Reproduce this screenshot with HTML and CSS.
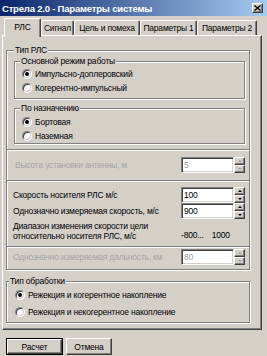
FILE: index.html
```html
<!DOCTYPE html>
<html lang="ru">
<head>
<meta charset="utf-8">
<title>Стрела 2.0 - Параметры системы</title>
<link rel="stylesheet" href="styles.css">
</head>
<body>
<div class="window">
  <div class="titlebar">
    <span class="title">Стрела 2.0 - Параметры системы</span>
    <span class="close"><svg width="7" height="6" viewBox="0 0 7 6"><path d="M0.5 0.5 L6.5 5.5 M6.5 0.5 L0.5 5.5" stroke="#000" stroke-width="1.4"/></svg></span>
  </div>
  <div class="tabs">
    <div class="tab tab-active tab-rls">РЛС</div>
    <div class="tab tab-signal">Сигнал</div>
    <div class="tab tab-target">Цель и помеха</div>
    <div class="tab tab-p1">Параметры 1</div>
    <div class="tab tab-p2">Параметры 2</div>
  </div>
  <div class="sheet">
    <div class="group group-outer">
      <span class="legend legend-outer">Тип РЛС</span>
      <div class="group group-inner group-mode">
        <span class="legend legend-inner">Основной режим работы</span>
        <div class="radio-row"><span class="radio radio-on"></span><span>Импульсно-доплеровский</span></div>
        <div class="radio-row"><span class="radio"></span><span>Когерентно-импульсный</span></div>
      </div>
      <div class="group group-inner group-dest">
        <span class="legend legend-inner">По назначению</span>
        <div class="radio-row"><span class="radio radio-on"></span><span>Бортовая</span></div>
        <div class="radio-row"><span class="radio"></span><span>Наземная</span></div>
      </div>
    </div>

    <div class="frame frame-height">
      <div class="field-row">
        <span class="label label-disabled">Высота установки антенны, м</span>
        <div class="spin spin-disabled"><span class="spin-field">5</span><span class="spin-btns"><span class="spin-btn"><i class="arrow-up"></i></span><span class="spin-btn"><i class="arrow-down"></i></span></span></div>
      </div>
    </div>

    <div class="frame frame-speed">
      <div class="field-row">
        <span class="label">Скорость носителя РЛС м/с</span>
        <div class="spin"><span class="spin-field">100</span><span class="spin-btns"><span class="spin-btn"><i class="arrow-up"></i></span><span class="spin-btn"><i class="arrow-down"></i></span></span></div>
      </div>
      <div class="field-row">
        <span class="label">Однозначно измеряемая скорость, м/с</span>
        <div class="spin"><span class="spin-field">900</span><span class="spin-btns"><span class="spin-btn"><i class="arrow-up"></i></span><span class="spin-btn"><i class="arrow-down"></i></span></span></div>
      </div>
      <div class="range-row">
        <span class="label label-two">Диапазон изменения скорости цели<br>относительно носителя РЛС, м/с</span>
        <span class="range-val"><span>-800...</span><span>1000</span></span>
      </div>
    </div>

    <div class="frame frame-range">
      <div class="field-row">
        <span class="label label-disabled">Однозначно измеряемая дальность, км</span>
        <div class="spin spin-disabled"><span class="spin-field">80</span><span class="spin-btns"><span class="spin-btn"><i class="arrow-up"></i></span><span class="spin-btn"><i class="arrow-down"></i></span></span></div>
      </div>
    </div>

    <div class="group group-proc">
      <span class="legend legend-proc">Тип обработки</span>
      <div class="radio-row"><span class="radio radio-on"></span><span>Режекция и когерентное накопление</span></div>
      <div class="radio-row"><span class="radio"></span><span>Режекция и некогерентное накопление</span></div>
    </div>
  </div>
  <div class="buttons">
    <div class="btn btn-default"><span class="btn-inner">Расчет</span></div>
    <div class="btn btn-cancel"><span class="btn-inner">Отмена</span></div>
  </div>
</div>
</body>
</html>
```
FILE: styles.css
```css
* { box-sizing: border-box; }
html, body { margin: 0; padding: 0; }
body {
  width: 267px;
  height: 356px;
  overflow: hidden;
  background: #d4d0c8;
  font-family: "Liberation Sans", Arial, sans-serif;
  font-size: 8.5px;
  letter-spacing: -0.2px;
  color: #000;
}
.window { width: 267px; height: 356px; display: flex; flex-direction: column; }

.titlebar {
  height: 16px;
  flex: none;
  background: linear-gradient(to right, #0a246a, #a6caf0);
  display: flex;
  align-items: center;
  justify-content: space-between;
  padding: 0 4px 0 2px;
}
.title { color: #fff; font-weight: bold; font-size: 9.5px; letter-spacing: -0.2px; }
.close {
  width: 11px; height: 10px;
  background: #d4d0c8;
  border: 1px solid;
  border-color: #fff #404040 #404040 #fff;
  box-shadow: inset -1px -1px 0 #808080;
  display: flex; align-items: center; justify-content: center;
}
.close svg { display: block; }

.tabs {
  flex: none;
  height: 17px;
  margin-top: 2px;
  padding-left: 4px;
  display: flex;
  align-items: flex-end;
}
.tab {
  height: 15px;
  flex: none;
  display: flex; align-items: center; justify-content: center;
  border: 1px solid;
  border-bottom: none;
  border-color: #fff #404040 #fff #fff;
  box-shadow: inset -1px 0 0 #808080;
  border-radius: 2px 2px 0 0;
  background: #d4d0c8;
  white-space: nowrap;
}
.tab-active {
  height: 19px;
  margin-bottom: -2px;
  padding-bottom: 2px;
  position: relative;
  z-index: 1;
}
.tab-rls { width: 37px; }
.tab-signal { width: 33px; }
.tab-target { width: 66px; }
.tab-p1 { width: 57px; }
.tab-p2 { width: 60px; }

.sheet {
  flex: none;
  margin-left: 2px;
  width: 260px;
  height: 295px;
  border: 1px solid;
  border-color: #fff #404040 #404040 #fff;
  box-shadow: inset -1px -1px 0 #808080;
  padding: 14px 0 0 3px;
  display: flex;
  flex-direction: column;
}

.group, .frame {
  position: relative;
  width: 244px;
  border: 1px solid #808080;
  box-shadow: inset 1px 1px 0 #fff, 1px 1px 0 #fff;
}
.legend {
  position: absolute;
  top: -6px;
  padding: 0 1px;
  line-height: 10px;
  background: #d4d0c8;
  white-space: nowrap;
}
.legend-outer { left: 7px; }
.legend-inner { left: 5px; }
.legend-proc { left: 2px; }

.group-outer { height: 100px; padding: 10px 0 0 7px; }
.group-inner { width: 231px; }
.group-mode { height: 38px; padding: 5px 0 0 7px; margin-bottom: 9px; }
.group-dest { height: 36px; padding: 6px 0 0 7px; }

.radio-row { height: 14px; display: flex; align-items: center; white-space: nowrap; }
.radio {
  width: 10px; height: 10px;
  margin-right: 3px;
  border-radius: 50%;
  background: #fff;
  border: 1px solid;
  border-color: #808080 #fff #fff #808080;
  box-shadow: inset 1px 1px 0 #404040, inset -1px -1px 0 #d4d0c8;
  display: flex; align-items: center; justify-content: center;
}
.radio-on::after {
  content: "";
  width: 4px; height: 4px;
  border-radius: 50%;
  background: #000;
}

.frame-height {
  height: 30px;
  border-top: none;
  border-bottom: none;
  padding: 0 4px 0 8px;
  display: flex; align-items: center;
}
.frame-speed { height: 67px; padding: 6px 4px 0 6px; }
.frame-range { height: 23px; border-top: none; padding: 2px 4px 0 6px; }
.frame-height .field-row, .frame-range .field-row { width: 100%; }

.field-row { height: 16px; display: flex; align-items: center; }
.label { flex: 1; white-space: nowrap; }
.label-disabled { color: #a4a4a4; }
.range-row { margin-top: 2px; display: flex; align-items: flex-end; }
.label-two { line-height: 10px; }
.range-val { width: 64px; display: flex; gap: 8px; line-height: 10px; padding-bottom: 1px; }

.spin { width: 64px; height: 16px; display: flex; }
.spin-field {
  width: 53px; height: 16px;
  background: #fff;
  border: 1px solid;
  border-color: #808080 #fff #fff #808080;
  box-shadow: inset 1px 1px 0 #404040, inset -1px -1px 0 #d4d0c8;
  padding: 0 2px;
  display: flex; align-items: center;
}
.spin-disabled .spin-field { color: #a4a4a4; }
.spin-btns { width: 11px; display: flex; flex-direction: column; }
.spin-btn {
  height: 8px;
  background: #d4d0c8;
  border: 1px solid;
  border-color: #fff #404040 #404040 #fff;
  box-shadow: inset -1px -1px 0 #808080;
  display: flex; align-items: center; justify-content: center;
}
.arrow-up, .arrow-down { width: 0; height: 0; border-left: 2px solid transparent; border-right: 2px solid transparent; }
.arrow-up { border-bottom: 2px solid #000; }
.arrow-down { border-top: 2px solid #000; }
.spin-disabled .arrow-up { border-bottom-color: #a0a0a0; }
.spin-disabled .arrow-down { border-top-color: #a0a0a0; }

.group-proc { height: 42px; margin-top: 11px; padding: 6px 0 0 8px; display: flex; flex-direction: column; gap: 3px; }

.buttons { flex: none; margin-top: 8px; padding-left: 6px; display: flex; gap: 3px; }
.btn { height: 17px; display: flex; }
.btn-default { width: 57px; border: 1px solid #000; }
.btn-cancel { width: 46px; }
.btn-inner {
  flex: 1;
  display: flex; align-items: center; justify-content: center;
  border: 1px solid;
  border-color: #fff #404040 #404040 #fff;
  box-shadow: inset -1px -1px 0 #808080;
}
```
